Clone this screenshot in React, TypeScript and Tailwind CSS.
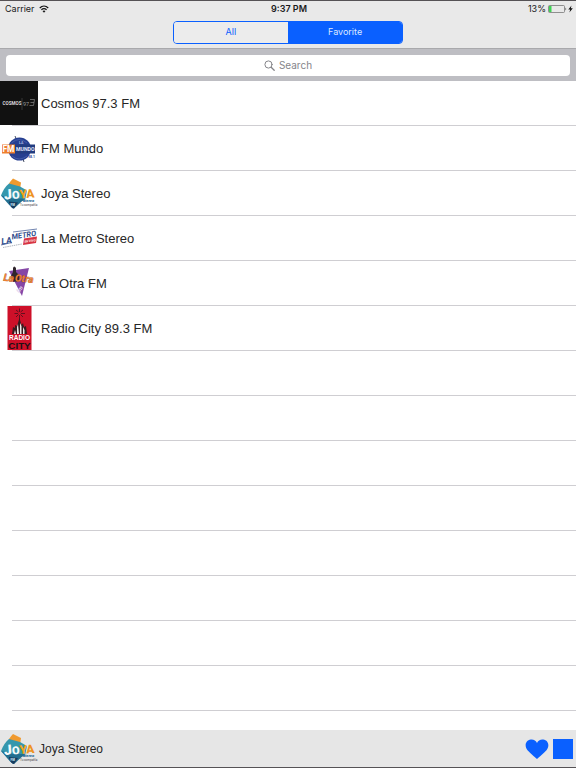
import { useState } from "react";
import type { ReactNode } from "react";
import clsx from "clsx";

type Station = {
	name: string;
	logo: ReactNode;
};

const TABS = ["All", "Favorite"];
const EMPTY_ROWS = 8;

export default function App() {
	const [tab, setTab] = useState("Favorite");
	const [search, setSearch] = useState("");

	const visible = STATIONS.filter((s) =>
		s.name.toLowerCase().includes(search.toLowerCase())
	);

	return (
		<div className="h-screen flex flex-col bg-white border-y border-[#555255] font-['Liberation_Sans',Arial,sans-serif]">
			<header className="shrink-0 bg-[#e9e9e9] border-b border-[#a9a9ac] font-['Inter',sans-serif]">
				<StatusBar />
				<div className="flex justify-center pt-1 pb-1">
					<div className="flex w-2/5 h-[23px] rounded-[4px] border border-[#0a60ff] overflow-hidden">
						{TABS.map((name) => (
							<button
								key={name}
								type="button"
								aria-pressed={tab === name}
								onClick={() => setTab(name)}
								className={clsx(
									"flex-1 pb-0.5 text-[9px]",
									tab === name
										? "bg-[#0a60ff] text-[#dce8ff]"
										: "bg-[#ececec] text-[#0a60ff]"
								)}
							>
								{name}
							</button>
						))}
					</div>
				</div>
			</header>

			<div className="shrink-0 h-8 px-1.5 flex items-center bg-[#bebec3] font-['Inter',sans-serif]">
				<label className="flex-1 h-[21px] flex items-center justify-center gap-1 rounded-[4px] bg-white">
					<SearchIcon />
					<input
						type="text"
						aria-label="Search"
						placeholder="Search"
						value={search}
						onChange={(e) => setSearch(e.target.value)}
						className="field-sizing-content text-[10px] text-gray-800 placeholder:text-[#85858a] outline-none"
					/>
				</label>
			</div>

			<ul className="flex-1 min-h-0 overflow-hidden">
				{visible.map((station) => (
					<li key={station.name} className="flex h-[45px]">
						<div className="w-3 shrink-0">
							<div className="w-[38px] h-11">{station.logo}</div>
						</div>
						<span className="flex-1 pl-[29px] pt-0.5 flex items-center border-b border-[#cfced2] text-[13px] text-[#262626]">
							{station.name}
						</span>
					</li>
				))}
				{Array.from({ length: EMPTY_ROWS }, (_, i) => (
					<li key={i} className="ml-3 h-[45px] border-b border-[#cfced2]" />
				))}
			</ul>

			<footer className="shrink-0 h-[37px] flex items-center pr-[3px] bg-[#e6e6e6]">
				<div className="w-[38px] h-[37px] shrink-0">
					<JoyaLogo />
				</div>
				<span className="ml-px flex-1 text-[12px] text-[#262626]">
					Joya Stereo
				</span>
				<button type="button" aria-label="Remove from favorites">
					<svg className="block w-6 h-5" viewBox="0 0 24 20" fill="#0a60ff">
						<path d="M12 20C10 18 5 14 2.500 11.200C-.8 7.500 .3 1.200 5.800 .5C8.700 .2 11 1.700 12 4C13 1.700 15.300 .2 18.200 .5C23.700 1.200 24.800 7.500 21.500 11.200C19 14 14 18 12 20Z" />
					</svg>
				</button>
				<button
					type="button"
					aria-label="Stop"
					className="ml-1 w-5 h-5 bg-[#0a60ff]"
				/>
			</footer>
		</div>
	);
}

function StatusBar() {
	return (
		<div className="h-4 pl-[5px] pr-[3px] grid grid-cols-3 items-center text-[9px] leading-4 text-[#1a1a1a]">
			<div className="flex items-center gap-1">
				Carrier
				<svg className="w-[10px] h-2" viewBox="0 0 20 16" fill="none">
					<path
						d="M1.500 6C6.500 1 13.500 1 18.500 6M4.800 9.500C8 6.500 12 6.500 15.200 9.500"
						stroke="#111"
						strokeWidth="2.400"
					/>
					<path d="M7 12Q10 9.500 13 12L10 15.500Z" fill="#111" />
				</svg>
			</div>
			<div className="text-center font-semibold">9:37 PM</div>
			<div className="flex items-center justify-end">
				13%
				<svg className="ml-0.5 w-[19px] h-2" viewBox="0 0 19 8">
					<rect
						x=".5"
						y=".5"
						width="16"
						height="7"
						rx="1"
						fill="none"
						stroke="#777"
						strokeWidth=".8"
					/>
					<rect x="1" y="1" width="2.500" height="6" fill="#3fd455" />
					<path d="M17.500 2.500Q19 4 17.500 5.500Z" fill="#333" />
				</svg>
				<svg className="ml-px w-[5px] h-2" viewBox="0 0 5 8">
					<path d="M3.500 .5L.3 4.500H2.200L1.400 7.500L4.800 3.300H2.800Z" fill="#111" />
				</svg>
			</div>
		</div>
	);
}

function SearchIcon() {
	return (
		<svg
			className="w-[11px] h-[11px]"
			viewBox="0 0 11 11"
			fill="none"
			stroke="#85858a"
			strokeLinecap="round"
		>
			<circle cx="4.500" cy="4.500" r="3.600" />
			<path d="M7.200 7.200L10.200 10.200" strokeWidth="1.300" />
		</svg>
	);
}

function CosmosLogo() {
	return (
		<svg
			className="w-full h-full"
			viewBox="0 0 38 44"
			fontFamily="Roboto, sans-serif"
		>
			<rect width="38" height="44" fill="#111" />
			<text x="2.500" y="24" fontSize="4.600" fontWeight="700" fill="#d8d8d8">
				COSMOS
			</text>
			<text x="23" y="24.500" fontSize="5.500" fill="#9b9b9b">
				97
			</text>
			<path d="M22 17V29" stroke="#555" strokeWidth=".6" />
			<path
				d="M30 18.500H34.500L33.500 24.500H29.500M30.500 21.500H34"
				stroke="#858585"
				strokeWidth=".7"
				fill="none"
			/>
		</svg>
	);
}

function MundoLogo() {
	return (
		<svg
			className="w-full h-full"
			viewBox="0 0 38 44"
			fontFamily="Roboto, sans-serif"
			fontWeight="700"
		>
			<path d="M15 10L18 17L24 36" stroke="#333d55" strokeWidth=".9" />
			<circle cx="19.500" cy="23" r="11.500" fill="#263f91" />
			<path
				d="M11.500 17Q19 10 27 17M12 30Q19 36 27 30"
				stroke="#4f69b3"
				fill="none"
				strokeWidth=".7"
			/>
			<text x="19" y="18" fontSize="3.500" fill="#a7b4df">
				LA
			</text>
			<rect x="2" y="18.500" width="13" height="9" fill="#ee7e2e" />
			<rect x="15" y="18.500" width="20" height="9" fill="#223c80" />
			<text x="2.500" y="26.300" fontSize="8.400" fill="#fff">
				FM
			</text>
			<text x="16" y="25" fontSize="5.200" fill="#e5eaff">
				MUNDO
			</text>
			<text x="28" y="31.500" fontSize="3.500" fill="#3450a0">
				98.1
			</text>
		</svg>
	);
}

function JoyaLogo() {
	return (
		<svg
			className="w-full h-full"
			viewBox="0 0 38 37"
			fontFamily="Roboto, sans-serif"
			fontWeight="900"
		>
			<path d="M9 9Q11 6 13 4L21 8L20 15L11 14Z" fill="#f09a2f" />
			<path d="M1 21Q4 13 9 9L20 12L27 16L25 26L13 28L3 23Z" fill="#3597ad" />
			<path d="M1 21L13 24L25 24L14 34Q12 34 7 28Z" fill="#226f90" />
			<path d="M9 27L18 28L14 34Q11 34 9 28Z" fill="#173c60" />
			<text
				x="4"
				y="24"
				fontSize="14"
				fill="#f5fafb"
				transform="rotate(-4 19 20)"
			>
				J<tspan fontSize="11">O</tspan>
				<tspan fontSize="12" fill="#f4a51c">
					Y
				</tspan>
				<tspan fontSize="12" fill="#ee9322">
					A
				</tspan>
			</text>
			<text x="23" y="27" fontSize="4" fontStyle="italic" fill="#286c98">
				stereo
			</text>
			<text x="10.500" y="31" fontSize="3" fill="#c7e1f0">
				FM
			</text>
			<text x="20" y="31" fontSize="3" fontWeight="400" fill="#444">
				Tu compañía
			</text>
		</svg>
	);
}

function MetroLogo() {
	return (
		<svg
			className="w-full h-full"
			viewBox="0 0 38 44"
			fontFamily="Roboto, sans-serif"
			fontWeight="700"
			fontStyle="italic"
		>
			<g transform="rotate(-9 19 23)" fill="#304d8d">
				<text x="1" y="26" fontSize="9">
					LA
				</text>
				<text x="12" y="22.500" fontSize="7.500">
					METRO
				</text>
			</g>
			<path d="M1 29L12 26.500M13 16L37 13" stroke="#304d8d" strokeWidth=".7" />
			<path d="M24 22.500L37 20.500L36 27L23 29Z" fill="#d73443" />
			<text
				x="24.500"
				y="26"
				fontSize="3"
				fill="#fff"
				transform="rotate(-7 30 25)"
			>
				EN VIVO
			</text>
			<path
				d="M3 31.500L22 28"
				stroke="#9ca2ad"
				strokeWidth=".8"
				strokeDasharray="1.500 .7"
			/>
		</svg>
	);
}

function OtraLogo() {
	return (
		<svg
			className="w-full h-full"
			viewBox="0 0 38 44"
			fontFamily="Roboto, sans-serif"
			fontWeight="700"
			fontStyle="italic"
		>
			<path d="M9 10L29 7L22 35Z" fill="#8546a6" />
			<path d="M13 11V7Q14 4 16 7V11L19 14V20L13 21L11 15Z" fill="#30252c" />
			<g
				fill="#f0822f"
				stroke="#743225"
				strokeWidth=".4"
				paintOrder="stroke"
				transform="rotate(5 18 17)"
			>
				<text x="3.500" y="21" fontSize="10">
					La
				</text>
				<text x="15" y="20.500" fontSize="10">
					Otra
				</text>
			</g>
			<text
				x="16"
				y="30"
				fontSize="6"
				fill="#e3d1ed"
				transform="rotate(-55 20 28)"
			>
				fm
			</text>
		</svg>
	);
}

function CityLogo() {
	return (
		<svg
			className="w-full h-full"
			viewBox="0 0 38 44"
			fontFamily="Liberation Sans, sans-serif"
			fontWeight="700"
		>
			<rect x="7.500" width="24" height="44" fill="#ce1029" />
			<path
				d="M19.500 2.500V6M19.500 9V17M14.500 7.500H18M21 7.500H25M16 4L18.500 6M23 4L20.500 6M16 11L18.500 8.500M23 11L20.500 8.500"
				stroke="#351018"
				strokeWidth=".7"
			/>
			<path
				d="M12 28L13 21L15 22V19L17 20L19.500 12L21.500 19L23 17L24 21L26 20L27 28Z"
				fill="#381b20"
			/>
			<path
				d="M14 28L15 24L16 28M17 28V21L18 18L19 28M20 28V17L21.500 20V28M23 28V21L24.500 24V28"
				fill="#eee9e7"
			/>
			<text x="19.500" y="34" fontSize="6.500" textAnchor="middle" fill="#fff">
				RADIO
			</text>
			<text
				x="19.500"
				y="42.500"
				fontSize="9.800"
				textAnchor="middle"
				fill="#211014"
			>
				CITY
			</text>
		</svg>
	);
}

const STATIONS: Station[] = [
	{ name: "Cosmos 97.3 FM", logo: <CosmosLogo /> },
	{ name: "FM Mundo", logo: <MundoLogo /> },
	{ name: "Joya Stereo", logo: <JoyaLogo /> },
	{ name: "La Metro Stereo", logo: <MetroLogo /> },
	{ name: "La Otra FM", logo: <OtraLogo /> },
	{ name: "Radio City 89.3 FM", logo: <CityLogo /> },
];
